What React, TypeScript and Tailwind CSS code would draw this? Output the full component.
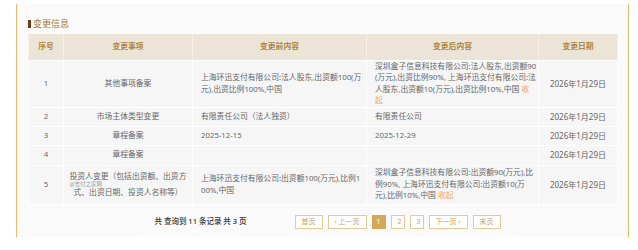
import React from "react";

type Row = {
	no: number;
	item: React.ReactNode;
	before: string[];
	after: React.ReactNode[];
	date: string;
	h: string;
};

const Fold = ({ text }: { text: string }) => <span className="text-[#f2a95e]">{text}</span>;

const rows: Row[] = [
	{
		no: 1,
		item: "其他事项备案",
		before: ["上海环迅支付有限公司:法人股东,出资额100(万", "元),出资比例100%,中国"],
		after: [
			"深圳盒子信息科技有限公司:法人股东,出资额90",
			"(万元),出资比例90%, 上海环迅支付有限公司:法",
			<>
				人股东,出资额10(万元),出资比例10%,中国 <Fold text="收" />
			</>,
			<Fold text="起" />,
		],
		date: "2026年1月29日",
		h: "h-[47px]",
	},
	{ no: 2, item: "市场主体类型变更", before: ["有限责任公司（法人独资）"], after: ["有限责任公司"], date: "2026年1月29日", h: "h-[19px]" },
	{ no: 3, item: "章程备案", before: ["2025-12-15"], after: ["2025-12-29"], date: "2026年1月29日", h: "h-[19px]" },
	{ no: 4, item: "章程备案", before: [], after: [], date: "2026年1月29日", h: "h-[20px]" },
	{
		no: 5,
		item: (
			<div className="inline-block text-left">
				<div className="whitespace-nowrap leading-[10px]">投资人变更（包括出资额、出资方</div>
				<div className="text-[5.5px] leading-[6px] text-[#999]">@支付之家网</div>
				<div className="whitespace-nowrap leading-[10px] pl-[4px]">式、出资日期、投资人名称等）</div>
			</div>
		),
		before: ["上海环迅支付有限公司:出资额100(万元),比例1", "00%,中国"],
		after: [
			"深圳盒子信息科技有限公司:出资额90(万元),比",
			"例90%, 上海环迅支付有限公司:出资额10(万",
			<>
				元),比例10%,中国 <Fold text="收起" />
			</>,
		],
		date: "2026年1月29日",
		h: "h-[39px]",
	},
];

const Lines = ({ lines }: { lines: React.ReactNode[] }) => (
	<>
		{lines.map((l, i) => (
			<div key={i} className="whitespace-nowrap">
				{l}
			</div>
		))}
	</>
);

const pageBtn = "h-[14px] px-[6px] border border-[#e3cb96] text-[#c9a25a] text-[7px] leading-[12px] bg-white";

export default function App() {
	return (
		<div
			className="w-[638px] h-[250px] bg-white pt-[4px]"
			style={{ fontFamily: '"Noto Sans", "Noto Sans CJK SC", sans-serif' }}
		>
			<div className="ml-4 w-[613px] h-[233px] bg-[#fafafa] border-x border-[#e9b967] px-[11px] pt-[14px]">
				{/* title */}
				<div className="flex items-center h-[12px] mb-[4px]">
					<span className="w-[3px] h-[8px] bg-[#6b3a14] mr-[2px]" />
					<span className="text-[9px] leading-[12px] text-[#a07a40]">变更信息</span>
				</div>

				{/* table */}
				<table className="w-[589px] table-fixed border-collapse text-[7.8px] text-[#666]">
					<colgroup>
						<col className="w-[35px]" />
						<col className="w-[129px]" />
						<col className="w-[174px]" />
						<col className="w-[172px]" />
						<col className="w-[79px]" />
					</colgroup>
					<thead>
						<tr className="h-[26px] bg-[#ece4d7] text-[#ae8644] font-bold text-[7.8px]">
							<th className="border-x border-[#f5f0e8]">序号</th>
							<th className="border-x border-[#f5f0e8]">变更事项</th>
							<th className="border-x border-[#f5f0e8]">变更前内容</th>
							<th className="border-x border-[#f5f0e8]">变更后内容</th>
							<th className="border-x border-[#f5f0e8]">变更日期</th>
						</tr>
					</thead>
					<tbody className="leading-[11.5px]">
						{rows.map((r) => (
							<tr key={r.no} className={r.h + " bg-[#f6f6f6]"}>
								<td className="border border-white text-center">{r.no}</td>
								<td className="border border-white text-center px-[3px]">{r.item}</td>
								<td className="border border-white pl-[8px]">
									<Lines lines={r.before} />
								</td>
								<td className="border border-white pl-[8px]">
									<Lines lines={r.after} />
								</td>
								<td className="border border-white text-center text-[8px]">{r.date}</td>
							</tr>
						))}
					</tbody>
				</table>

				{/* pagination */}
				<div className="flex items-center justify-center pl-[10px] mt-[10px]">
					<span className="text-[7.5px] text-[#333] font-medium mr-[48px]">共 查询到 11 条记录 共 3 页</span>
					<div className="flex gap-[5px]">
						<button className={pageBtn}>首页</button>
						<button className={pageBtn}>‹ 上一页</button>
						<button className="h-[14px] w-[14px] bg-[#d3a955] border border-[#d3a955] text-white text-[7px] leading-[12px]">1</button>
						<button className={pageBtn + " w-[14px] px-0"}>2</button>
						<button className={pageBtn + " w-[14px] px-0"}>3</button>
						<button className={pageBtn}>下一页 ›</button>
						<button className={pageBtn}>末页</button>
					</div>
				</div>
			</div>
		</div>
	);
}
